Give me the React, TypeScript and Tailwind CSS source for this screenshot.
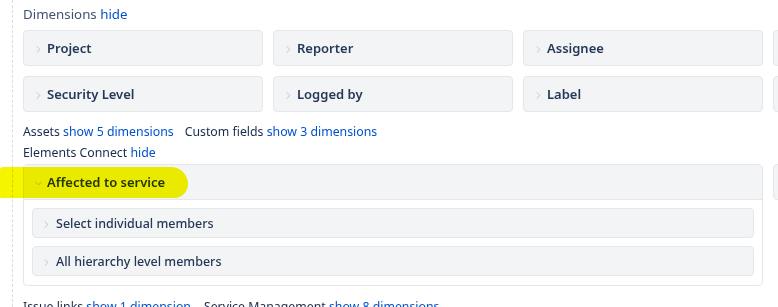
import { ChevronRight, ChevronDown } from "lucide-react";

const font = { fontFamily: '"Noto Sans", "Open Sans", sans-serif' };

function Chip({ label, width = "w-[240px]" }: { label: string; width?: string }) {
  return (
    <div
      className={`flex h-[36px] shrink-0 items-center rounded-[4px] border border-[#e4e6ea] bg-[#f3f4f6] pl-[9px] pt-[2px] ${width}`}
    >
      <ChevronRight size={11} strokeWidth={1.5} className="text-[#a5adba]" />
      <span className="ml-[3px] text-[13px] font-semibold text-[#253858]">{label}</span>
    </div>
  );
}

function SubItem({ label }: { label: string }) {
  return (
    <div className="flex h-[30px] items-center rounded-[4px] border border-[#e4e6ea] bg-[#f3f4f6] pl-[8px] pt-[2px]">
      <ChevronRight size={11} strokeWidth={1.5} className="text-[#a5adba]" />
      <span className="ml-[4px] text-[12.5px] font-medium text-[#253858]">{label}</span>
    </div>
  );
}

function Link({ children }: { children: React.ReactNode }) {
  return <span className="text-[#0052cc]">{children}</span>;
}

export default function App() {
  return (
    <div style={font} className="relative h-[307px] w-[778px] overflow-hidden bg-white">
      <div className="ml-[12px] h-full border-l border-dashed border-[#d9dce1] pl-[10px]">
        <p className="pt-[4px] text-[13.3px] leading-[20px] text-[#42526e]">
          Dimensions <Link>hide</Link>
        </p>

        <div className="mt-[6px] flex gap-[10px]">
          <Chip label="Project" />
          <Chip label="Reporter" />
          <Chip label="Assignee" />
          <Chip label="" />
        </div>
        <div className="mt-[10px] flex gap-[10px]">
          <Chip label="Security Level" />
          <Chip label="Logged by" />
          <Chip label="Label" />
          <Chip label="" />
        </div>

        <p className="mt-[10px] text-[12.3px] leading-[20px] text-[#172b4d]">
          Assets <Link>show 5 dimensions</Link>
          <span className="ml-[11px]">Custom fields</span> <Link>show 3 dimensions</Link>
        </p>
        <p className="mt-[1px] text-[12.3px] leading-[20px] text-[#172b4d]">
          Elements Connect <Link>hide</Link>
        </p>

        <div className="mt-[1px] flex gap-[10px]">
          <div className="w-[740px] shrink-0 rounded-[4px] border border-[#e4e6ea] bg-white">
            <div className="flex h-[35px] items-center border-b border-[#e4e6ea] bg-[#f3f4f6] pl-[9px] pt-[2px]">
              <ChevronDown size={11} strokeWidth={1.5} className="text-[#a5adba]" />
              <span className="ml-[3px] text-[13px] font-semibold text-[#253858]">
                Affected to service
              </span>
            </div>
            <div className="flex flex-col gap-[8px] px-[8px] pb-[9px] pt-[8px]">
              <SubItem label="Select individual members" />
              <SubItem label="All hierarchy level members" />
            </div>
          </div>
          <Chip label="" />
        </div>

        <p className="mt-[11px] text-[12.3px] leading-[20px] text-[#172b4d]">
          Issue links <Link>show 1 dimension</Link>
          <span className="ml-[13px]">Service Management</span> <Link>show 8 dimensions</Link>
        </p>
      </div>

      {/* marker highlight painted over the expanded dimension */}
      <div className="pointer-events-none absolute left-0 top-[167px] z-10 h-[31px] w-[188px] rounded-[4px_22px_18px_2px] bg-[#f5f500] mix-blend-multiply" />
    </div>
  );
}
